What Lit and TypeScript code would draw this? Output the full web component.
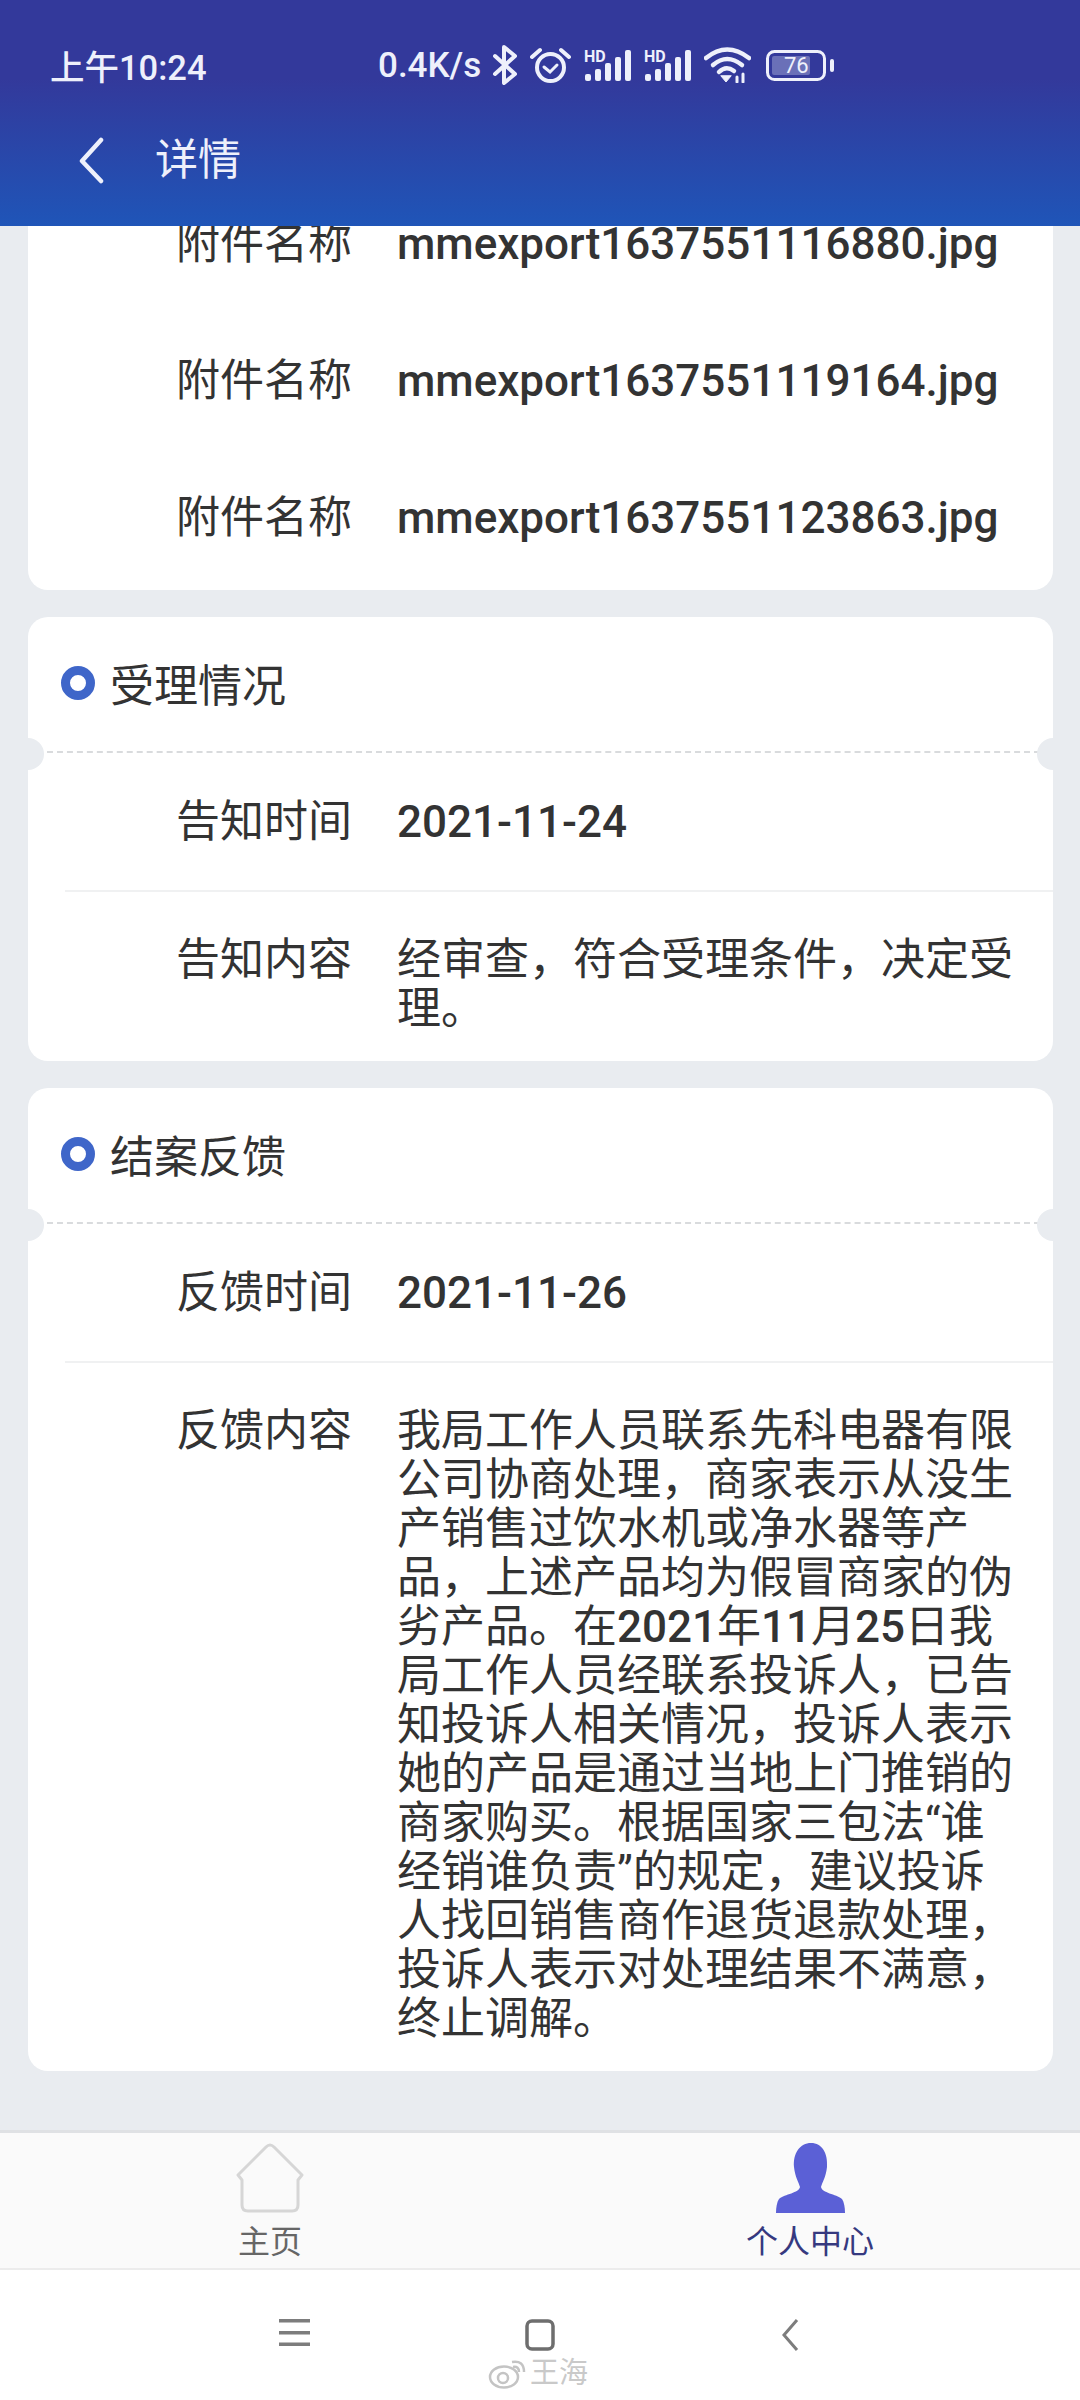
import { LitElement, html, css, svg } from "lit";
import { customElement } from "lit/decorators.js";

const bars = svg`
  <text x="0" y="13" font-family="Roboto" font-weight="700" font-size="16" fill="#eef0fb">HD</text>
  <rect x="1" y="25" width="6" height="7" rx="2" fill="#eef0fb"/>
  <rect x="11" y="20" width="6" height="12" rx="2" fill="#eef0fb"/>
  <rect x="21" y="14" width="6" height="18" rx="2" fill="#eef0fb"/>
  <rect x="31" y="8" width="6" height="24" rx="2" fill="#eef0fb"/>
  <rect x="41" y="1" width="6" height="31" rx="2" fill="#eef0fb"/>`;

@customElement("app-root")
export class AppRoot extends LitElement {
  static styles = css`
    :host {
      display: flex;
      flex-direction: column;
      width: 1080px;
      height: 2400px;
      background: #e9ecf0;
      font-family: Roboto, "Noto Sans CJK SC", sans-serif;
      color: #333;
      overflow: hidden;
    }
    header {
      flex: none;
      height: 226px;
      box-sizing: border-box;
      background: linear-gradient(180deg, #33399b 0%, #33399b 35%, #1f55b8 100%);
      color: #eef0fb;
      position: relative;
      z-index: 1;
    }
    .status {
      height: 130px;
      display: flex;
      align-items: center;
      padding-left: 50px;
      box-sizing: border-box;
    }
    .time { width: 328px; font-size: 34.5px; font-weight: 500; white-space: nowrap; }
    .speed { width: 114px; font-size: 35px; font-weight: 500; white-space: nowrap; }
    .status svg { display: block; flex: none; }
    .bt { margin-right: 12px; }
    .alarm { margin-right: 13px; }
    .sig { margin-right: 12px; }
    .wifi { margin-right: 15px; }
    .toolbar { display: flex; align-items: center; height: 60px; padding-left: 78px; }
    .toolbar svg { display: block; margin-right: 51px; }
    .title { font-size: 43px; line-height: 60px; }
    main {
      flex: 1;
      min-height: 0;
      overflow: hidden;
      display: flex;
      flex-direction: column;
      gap: 27px;
      padding: 0 27px 0 28px;
    }
    .card {
      flex: none;
      position: relative;
      background: #fff;
      border-radius: 20px;
      overflow: hidden;
    }
    .scrolled { margin-top: -50px; padding-bottom: 3px; }
    .card-head {
      height: 136px;
      box-sizing: border-box;
      margin: 0 13px 0 19px;
      border-bottom: 2px dashed #d9dbdd;
      display: flex;
      align-items: center;
      gap: 15px;
      font-size: 44px;
      padding: 0 0 2px 14px;
    }
    .dot {
      width: 34px;
      height: 34px;
      box-sizing: border-box;
      border: 9px solid #3f66c9;
      border-radius: 50%;
    }
    .notch {
      position: absolute;
      top: 121px;
      width: 32px;
      height: 32px;
      border-radius: 50%;
      background: #e9ecf0;
    }
    .notch.l { left: -16px; }
    .notch.r { right: -16px; }
    .row {
      display: grid;
      grid-template-columns: 324px 1fr;
      column-gap: 45px;
      padding: 45px 35px 44px 0;
      font-size: 44px;
      line-height: 49px;
      position: relative;
    }
    .row:last-child { padding-bottom: 27px; }
    .row + .row::before {
      content: "";
      position: absolute;
      left: 37px;
      right: 0;
      top: -1px;
      height: 2px;
      background: #f0f1f2;
    }
    .plain, .plain:last-child { padding: 44px 35px 44px 0; }
    .plain + .plain::before { display: none; }
    .label { text-align: right; white-space: nowrap; }
    .value { color: #333; }
    .n { font-weight: 500; font-size: 44px; }
    .file { white-space: nowrap; }
    .tabs {
      flex: none;
      height: 140px;
      box-sizing: border-box;
      background: #fafafa;
      border-top: 3px solid #dfe1e4;
      border-bottom: 2px solid #ececec;
      display: grid;
      grid-template-columns: 1fr 1fr;
    }
    .tab {
      display: flex;
      flex-direction: column;
      align-items: center;
      padding-top: 10px;
      font-size: 32px;
      line-height: 40px;
      color: #666;
    }
    .tab svg { display: block; margin-bottom: 9px; }
    .tab.on { color: #36397f; }
    .nav {
      flex: none;
      height: 130px;
      background: #fff;
      position: relative;
      display: grid;
      grid-template-columns: 295px 245px 250px;
      justify-items: end;
      align-items: start;
      padding-top: 49px;
      box-sizing: border-box;
    }
    .nav svg { display: block; }
    .nav > svg:nth-child(1) { margin-right: -15px; }
    .nav > svg:nth-child(2) { margin-right: -15px; }
    .nav > svg:nth-child(3) { margin-right: -9px; }
    .mark {
      position: absolute;
      left: 488px;
      top: 87px;
      display: flex;
      align-items: center;
      gap: 3px;
      color: #c9c9c9;
      font-size: 29px;
      line-height: 32px;
    }
  `;

  private row(label: string, value: unknown, plain = false) {
    return html`<div class="row ${plain ? "plain" : ""}">
      <div class="label">${label}</div>
      <div class="value">${value}</div>
    </div>`;
  }

  private file(name: string) {
    return this.row("附件名称", html`<span class="n file">${name}</span>`, true);
  }

  render() {
    return html`
      <header>
        <div class="status">
          <div class="time">上午10:24</div>
          <div class="speed">0.4K/s</div>
          <svg class="bt" width="26" height="40" viewBox="0 0 26 40" fill="none" stroke="#eef0fb" stroke-width="4" stroke-linejoin="round" stroke-linecap="round">
            <path d="M3 11 L23 29 L12 38 V2 L23 11 L3 29"/>
          </svg>
          <svg class="alarm" width="41" height="36" viewBox="0 0 41 36" fill="none" stroke="#eef0fb" stroke-linecap="round">
            <circle cx="20.5" cy="20.5" r="13.5" stroke-width="4"/>
            <path d="M14 20 L20 25 L27 18" stroke-width="3"/>
            <path d="M2 10 L10 3 M39 10 L31 3" stroke-width="4"/>
          </svg>
          <svg class="sig" width="48" height="33" viewBox="0 0 48 33">${bars}</svg>
          <svg class="sig" width="48" height="33" viewBox="0 0 48 33">${bars}</svg>
          <svg class="wifi" width="47" height="36" viewBox="0 0 47 36" fill="none" stroke="#eef0fb" stroke-width="4.5" stroke-linecap="round">
            <path d="M2 11 Q23 -6 45 11"/>
            <path d="M9 18 Q23 6 38 18"/>
            <path d="M15 25 Q22 18 30 24"/>
            <path d="M17 29 L22 35 L27 29 Z" fill="#eef0fb" stroke-width="1"/>
            <path d="M33 30 V35 M39 27 V35" stroke-width="3"/>
          </svg>
          <svg width="69" height="31" viewBox="0 0 69 31">
            <rect x="1.5" y="1.5" width="57" height="28" rx="7" fill="none" stroke="#eef0fb" stroke-width="3"/>
            <rect x="6" y="6" width="38" height="19" rx="2" fill="#6a70b8"/>
            <rect x="64" y="9" width="4" height="13" rx="2" fill="#eef0fb"/>
            <text x="18" y="23" font-family="Roboto" font-size="22" fill="#eef0fb">76</text>
          </svg>
        </div>
        <div class="toolbar">
          <svg width="26" height="47" viewBox="0 0 26 47" fill="none" stroke="#eef0fb" stroke-width="4.5" stroke-linecap="round" stroke-linejoin="round">
            <path d="M23 3 L4 24 L23 44"/>
          </svg>
          <div class="title">详情</div>
        </div>
      </header>
      <main>
        <section class="card scrolled">
          ${this.file("mmexport1637551116880.jpg")}
          ${this.file("mmexport1637551119164.jpg")}
          ${this.file("mmexport1637551123863.jpg")}
        </section>
        <section class="card">
          <div class="card-head"><span class="dot"></span>受理情况</div>
          <i class="notch l"></i><i class="notch r"></i>
          ${this.row("告知时间", html`<span class="n">2021-11-24</span>`)}
          ${this.row("告知内容", "经审查，符合受理条件，决定受理。")}
        </section>
        <section class="card">
          <div class="card-head"><span class="dot"></span>结案反馈</div>
          <i class="notch l"></i><i class="notch r"></i>
          ${this.row("反馈时间", html`<span class="n">2021-11-26</span>`)}
          ${this.row(
            "反馈内容",
            html`我局工作人员联系先科电器有限公司协商处理，商家表示从没生产销售过饮水机或净水器等产品，上述产品均为假冒商家的伪劣产品。在<span class="n">2021</span>年<span class="n">11</span>月<span class="n">25</span>日我局工作人员经联系投诉人，已告知投诉人相关情况，投诉人表示她的产品是通过当地上门推销的商家购买。根据国家三包法“谁经销谁负责”的规定，建议投诉人找回销售商作退货退款处理，投诉人表示对处理结果不满意，终止调解。`
          )}
        </section>
      </main>
      <nav class="tabs">
        <div class="tab">
          <svg width="70" height="70" viewBox="0 0 70 70" fill="none" stroke="#d6d6d6" stroke-width="3" stroke-linejoin="round">
            <path d="M31 4 Q35 0 39 4 L67 32 L63 37 V62 Q63 68 57 68 H13 Q7 68 7 62 V37 L3 32 Z"/>
          </svg>
          主页
        </div>
        <div class="tab on">
          <svg width="69" height="70" viewBox="0 0 69 70">
            <path fill="#5b60d6" d="M35 0 C46 0 52 10 51 24 C50 34 46 40 45 44 C46 50 60 51 66 56 C68 59 69 64 69 70 H0 C0 64 1 59 3 56 C9 51 23 50 24 44 C23 40 19 34 18 24 C17 10 24 0 35 0 Z"/>
          </svg>
          个人中心
        </div>
      </nav>
      <div class="nav">
        <svg width="31" height="27" viewBox="0 0 31 27" fill="#7d7d7d">
          <rect y="0" width="31" height="3.5"/><rect y="12" width="31" height="3.5"/><rect y="23.5" width="31" height="3.5"/>
        </svg>
        <svg width="30" height="32" viewBox="0 0 30 32" fill="none" stroke="#6e6e6e" stroke-width="3.5">
          <rect x="2" y="2" width="26" height="28" rx="5"/>
        </svg>
        <svg width="18" height="32" viewBox="0 0 18 32" fill="none" stroke="#7d7d7d" stroke-width="3">
          <path d="M16 1 L3 16 L16 31"/>
        </svg>
        <div class="mark">
          <svg width="39" height="32" viewBox="0 0 39 32" fill="none" stroke="#c4c4c4" stroke-width="2.5">
            <ellipse cx="16" cy="20" rx="14" ry="10.5"/>
            <circle cx="15" cy="21" r="5"/>
            <path d="M24 5 Q36 3 36 15 M25 10 Q31 9 31 15"/>
          </svg>
          <span>王海</span>
        </div>
      </div>
    `;
  }
}
